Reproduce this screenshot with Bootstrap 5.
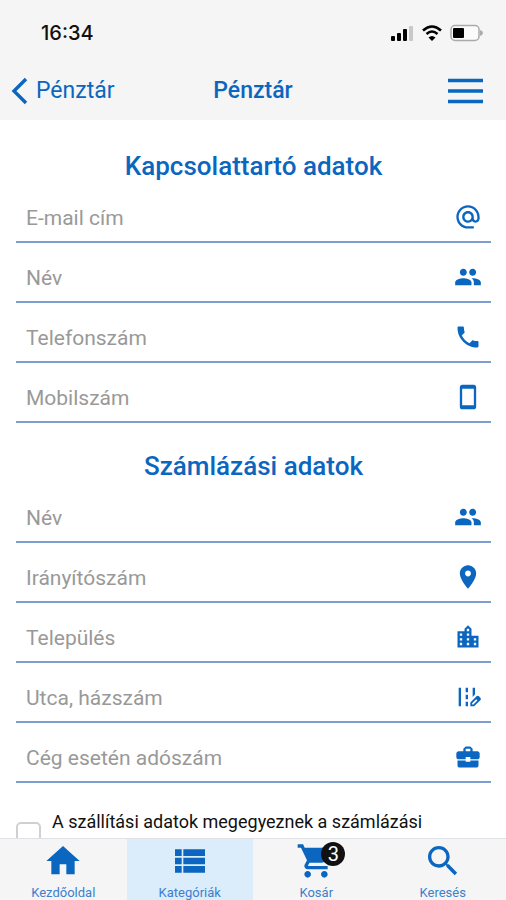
<!DOCTYPE html>
<html lang="hu">
<head>
<meta charset="utf-8">
<meta name="viewport" content="width=device-width, initial-scale=1">
<title>Pénztár</title>
<link href="https://cdn.jsdelivr.net/npm/bootstrap@5.3.0/dist/css/bootstrap.min.css" rel="stylesheet">
<style>
  :root { --brand: #0b66c0; --bar: #f5f5f5; }
  body { font-family: Roboto, sans-serif; color: #111; }
  .text-brand { color: var(--brand); }
  .bar { background: var(--bar); }
  .status { height: 62px; padding: 4px 23px 0 41px; font: 500 20px/28px Inter, sans-serif; }
  .title-row { height: 58px; }
  .title-row svg { display: block; }
  .back { font-size: 23px; line-height: 28px; margin-left: 11px; }
  .page-title { font-size: 23px; line-height: 28px; font-weight: 500; }
  .menu-btn { margin-right: 23px; }
  .section-title { font-size: 26px; line-height: 34px; font-weight: 500; margin: 26px 0 0; text-align: center; }
  .checkout { padding: 3px 15px 0 16px; scrollbar-width: none; }
  .field { height: 50px; margin-top: 10px; padding-right: 9px; border-bottom: 2px solid #7d9fd0; }
  .field .form-control { font-size: 21px; line-height: 28px; padding: 1px 10px 0; border: 0; box-shadow: none; background: none; }
  .field .form-control::placeholder { color: #999; opacity: 1; }
  .field svg { width: 28px; height: 28px; fill: var(--brand); flex-shrink: 0; }
  .same { padding-top: 25px; gap: 11px; }
  .same .form-check-input { width: 25px; height: 25px; margin: 14px 0 0; border: 2px solid #d0d0d0; border-radius: 5px; }
  .same label { font-size: 18px; line-height: 28px; }
  .tabs { height: 62px; }
  .tabs a { font-size: 13px; line-height: 14px; padding-top: 2px; color: #3d80cc; }
  .tabs a.active { background: #dbecfb; }
  .tabs svg { width: 40px; height: 40px; fill: var(--brand); }
  .tabs .glyph { height: 40px; margin-bottom: 5px; }
  .count { left: 25px; top: 1px; width: 24px; height: 24px; font-size: 20px; line-height: 24px; background: #111; color: #fff; }
</style>
</head>
<body>
<svg class="d-none" aria-hidden="true">
  <symbol id="people" viewBox="0 0 24 24"><path d="M16 11c1.660 0 2.990-1.340 2.990-3S17.660 5 16 5c-1.660 0-3 1.340-3 3s1.340 3 3 3zm-8 0c1.660 0 2.990-1.340 2.990-3S9.660 5 8 5C6.340 5 5 6.340 5 8s1.340 3 3 3zm0 2c-2.330 0-7 1.170-7 3.500V19h14v-2.500c0-2.330-4.670-3.500-7-3.500zm8 0c-.29 0-.62.02-.97.05 1.160.84 1.970 1.970 1.970 3.450V19h6v-2.500c0-2.330-4.670-3.500-7-3.500z"/></symbol>
</svg>
<div class="d-flex flex-column vh-100">
  <header class="bar flex-shrink-0">
    <div class="status d-flex align-items-center justify-content-between">
      <span>16:34</span>
      <div class="d-flex align-items-center gap-2">
        <svg width="23" height="16" viewBox="0 0 23 16"><rect x="0" y="11" width="4" height="5" rx="1"/><rect x="6" y="8" width="4" height="8" rx="1"/><rect x="12" y="4" width="4" height="12" rx="1"/><rect x="18" y="1" width="4" height="15" rx="1" fill="#c8c8c8"/></svg>
        <svg width="20" height="16" viewBox="0 0 20 16" fill="none" stroke="#000" stroke-width="2.600"><path d="M1 5.500Q10-2.500 19 5.500M4.500 9Q10 4 15.500 9"/><path d="M10 16L6.500 12.500Q10 9.500 13.500 12.500Z" fill="#000" stroke="none"/></svg>
        <svg width="33" height="18" viewBox="0 0 33 18"><rect x="1" y="1.500" width="28" height="15" rx="4" fill="#fbfbfb" stroke="#aaa" stroke-width="1.500"/><rect x="3" y="4" width="11" height="10" rx="1"/><path d="M30 6v6q3-1 3-3t-3-3z" fill="#aaa"/></svg>
      </div>
    </div>
    <div class="title-row row g-0 align-items-center">
      <div class="col d-flex"><a href="#" class="back text-brand text-decoration-none d-flex align-items-center gap-2"><svg width="17" height="28" viewBox="0 0 17 28" fill="none" stroke="currentColor" stroke-width="3.400"><path d="M15 2L3 14l12 12"/></svg>Pénztár</a></div>
      <h1 class="col-auto page-title text-brand mb-0">Pénztár</h1>
      <div class="col d-flex justify-content-end"><button type="button" class="menu-btn btn border-0 p-0 text-brand" aria-label="Menü"><svg width="35" height="26" viewBox="0 0 35 26" stroke="currentColor" stroke-width="3.400"><path d="M0 2.500h35M0 13h35M0 23.500h35"/></svg></button></div>
    </div>
  </header>

  <main class="checkout flex-grow-1 overflow-auto">
    <form>
      <h2 class="section-title text-brand">Kapcsolattartó adatok</h2>
      <div class="field d-flex align-items-center"><input type="email" class="form-control" placeholder="E-mail cím" aria-label="E-mail cím"><svg viewBox="0 0 24 24"><path d="M12 1.950c-5.520 0-10 4.480-10 10s4.480 10 10 10h5v-2h-5c-4.340 0-8-3.660-8-8s3.660-8 8-8 8 3.660 8 8v1.430c0 .79-.71 1.570-1.500 1.570s-1.500-.78-1.500-1.570v-1.430c0-2.760-2.240-5-5-5s-5 2.240-5 5 2.240 5 5 5c1.380 0 2.640-.56 3.540-1.470.65.89 1.770 1.470 2.960 1.470 1.970 0 3.500-1.600 3.500-3.570v-1.430c0-5.520-4.480-10-10-10zm0 13c-1.660 0-3-1.340-3-3s1.340-3 3-3 3 1.340 3 3-1.340 3-3 3z"/></svg></div>
      <div class="field d-flex align-items-center"><input type="text" class="form-control" placeholder="Név" aria-label="Név"><svg><use href="#people"/></svg></div>
      <div class="field d-flex align-items-center"><input type="tel" class="form-control" placeholder="Telefonszám" aria-label="Telefonszám"><svg viewBox="0 0 24 24"><path d="M6.620 10.790c1.440 2.830 3.760 5.140 6.590 6.590l2.200-2.200c.27-.27.67-.36 1.020-.24 1.120.37 2.330.57 3.570.57.55 0 1 .45 1 1V20c0 .55-.45 1-1 1-9.390 0-17-7.610-17-17 0-.55.45-1 1-1h3.500c.55 0 1 .45 1 1 0 1.250.2 2.450.57 3.570.11.35.03.74-.25 1.020l-2.200 2.200z"/></svg></div>
      <div class="field d-flex align-items-center"><input type="tel" class="form-control" placeholder="Mobilszám" aria-label="Mobilszám"><svg viewBox="0 0 24 24"><path d="M17 1.500H7c-1.100 0-2 .9-2 2v17c0 1.100.9 2 2 2h10c1.100 0 2-.9 2-2v-17c0-1.100-.9-2-2-2zM17 19H7V5h10v14z"/></svg></div>

      <h2 class="section-title text-brand">Számlázási adatok</h2>
      <div class="field d-flex align-items-center"><input type="text" class="form-control" placeholder="Név" aria-label="Számlázási név"><svg><use href="#people"/></svg></div>
      <div class="field d-flex align-items-center"><input type="text" class="form-control" placeholder="Irányítószám" aria-label="Irányítószám"><svg viewBox="0 0 24 24"><path d="M12 2C8.130 2 5 5.130 5 9c0 5.250 7 13 7 13s7-7.750 7-13c0-3.870-3.130-7-7-7zm0 9.500c-1.380 0-2.500-1.120-2.500-2.500s1.120-2.500 2.500-2.500 2.500 1.120 2.500 2.500-1.120 2.500-2.500 2.500z"/></svg></div>
      <div class="field d-flex align-items-center"><input type="text" class="form-control" placeholder="Település" aria-label="Település"><svg viewBox="0 0 24 24"><path d="M15 11V5l-3-3-3 3v2H3v14h18V11h-6zm-8 8H5v-2h2v2zm0-4H5v-2h2v2zm0-4H5V9h2v2zm6 8h-2v-2h2v2zm0-4h-2v-2h2v2zm0-4h-2V9h2v2zm0-4h-2V5h2v2zm6 12h-2v-2h2v2zm0-4h-2v-2h2v2z"/></svg></div>
      <div class="field d-flex align-items-center"><input type="text" class="form-control" placeholder="Utca, házszám" aria-label="Utca, házszám"><svg viewBox="0 0 24 24"><path d="M18 4h-2v7.900l2-2V4zM4 4h2v16H4V4zM10 4h2v4h-2V4zM10 10h2v4h-2v-4zM10 16h2v4h-2v-4zM22.560 12.590l-1.150-1.150c-.59-.59-1.540-.59-2.120 0L14 16.730V20h3.270l5.290-5.290c.59-.59.59-1.540 0-2.120zM16.580 18.450h-1.030v-1.030L19 13.970 20.030 15l-3.450 3.450z"/></svg></div>
      <div class="field d-flex align-items-center"><input type="text" class="form-control" placeholder="Cég esetén adószám" aria-label="Cég esetén adószám"><svg viewBox="0 0 24 24"><path d="M10 16v-1H3.010L3 19c0 1.110.89 2 2 2h14c1.110 0 2-.89 2-2v-4h-7v1h-4zm10-9h-4.010V5l-2-2h-4l-2 2v2H4c-1.100 0-2 .9-2 2v3c0 1.110.89 2 2 2h6v-2h4v2h6c1.100 0 2-.9 2-2V9c0-1.100-.9-2-2-2zm-6 0h-4V5h4v2z"/></svg></div>

      <div class="same d-flex">
        <input class="form-check-input flex-shrink-0" type="checkbox" id="same">
        <label for="same">A szállítási adatok megegyeznek a számlázási</label>
      </div>
    </form>
  </main>

  <nav class="tabs bar row g-0 flex-shrink-0 border-top text-center">
    <a href="#" class="col h-100 text-decoration-none"><div class="glyph"><svg viewBox="0 0 24 24"><path d="M10 20v-6h4v6h5v-8h3L12 3 2 12h3v8z"/></svg></div>Kezdőoldal</a>
    <a href="#" class="col h-100 text-decoration-none active" aria-current="page"><div class="glyph"><svg viewBox="0 0 24 24"><path d="M3 14h4v-4H3v4zm0 5h4v-4H3v4zM3 9h4V5H3v4zm5 5h13v-4H8v4zm0 5h13v-4H8v4zM8 5v4h13V5H8z"/></svg></div>Kategóriák</a>
    <a href="#" class="col h-100 text-decoration-none"><div class="glyph d-inline-block position-relative"><svg viewBox="0 0 24 24"><path d="M7 18c-1.100 0-1.990.9-1.990 2S5.900 22 7 22s2-.9 2-2-.9-2-2-2zM1 2v2h2l3.600 7.590-1.350 2.450c-.16.28-.25.61-.25.96 0 1.100.9 2 2 2h12v-2H7.420c-.14 0-.25-.11-.25-.25l.03-.12.9-1.630h7.450c.75 0 1.410-.41 1.750-1.030l3.580-6.490A1 1 0 0 0 20 4H5.210l-.94-2H1zm16 16c-1.100 0-1.990.9-1.990 2s.89 2 1.990 2 2-.9 2-2-.9-2-2-2z"/></svg><span class="count position-absolute rounded-circle">3</span></div><div>Kosár</div></a>
    <a href="#" class="col h-100 text-decoration-none"><div class="glyph"><svg viewBox="0 0 24 24"><path d="M15.500 14h-.79l-.28-.27C15.410 12.590 16 11.110 16 9.500 16 5.910 13.090 3 9.500 3S3 5.910 3 9.500 5.910 16 9.500 16c1.610 0 3.090-.59 4.230-1.570l.27.28v.79l5 4.990L20.490 19l-4.990-5zm-6 0C7.010 14 5 11.990 5 9.500S7.010 5 9.500 5 14 7.010 14 9.500 11.990 14 9.500 14z"/></svg></div>Keresés</a>
  </nav>
</div>
<script src="https://cdn.jsdelivr.net/npm/bootstrap@5.3.0/dist/js/bootstrap.bundle.min.js"></script>
</body>
</html>
